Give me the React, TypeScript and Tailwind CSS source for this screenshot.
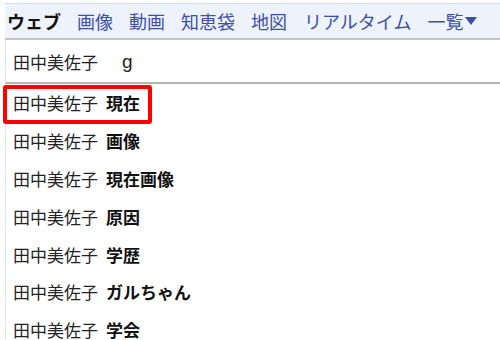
import React from "react";

const font = { fontFamily: '"Noto Sans CJK JP", "Noto Sans", sans-serif' };

const rows = ["現在", "画像", "現在画像", "原因", "学歴", "ガルちゃん", "学会"];

export default function App() {
  return (
    <div className="relative w-[500px] h-[340px] bg-white overflow-hidden pl-[5px] pt-[3px] text-[#222]" style={font}>
      <div className="h-[37px] bg-[#eef2fb] border-t border-[#d3dcef] border-b-2 border-b-[#c4c4c4] flex items-center pl-[2px] gap-[16px] text-[18px] leading-none">
        <span className="font-bold text-[#111]">ウェブ</span>
        <span className="text-[#3b4fa3]">画像</span>
        <span className="text-[#3b4fa3]">動画</span>
        <span className="text-[#3b4fa3]">知恵袋</span>
        <span className="text-[#3b4fa3]">地図</span>
        <span className="text-[#3b4fa3] ml-[1px]">リアルタイム</span>
        <span className="text-[#3b4fa3] flex items-center">
          一覧
          <svg width="14" height="10" viewBox="0 0 14 10" className="ml-[1px]">
            <path d="M1 1 L13 1 L7 9 Z" fill="#3b4fa3" />
          </svg>
        </span>
      </div>
      <div className="h-[44px] flex items-center pl-[7px] border-l border-[#e6e6e6] border-b-2 border-b-[#b4b4b4] text-[17px] leading-none">
        <span>田中美佐子</span>
        <span className="ml-[24px] text-[19px]" style={{ fontFamily: '"Liberation Sans", Arial, sans-serif' }}>g</span>
      </div>
      <div className="border-l border-[#e6e6e6] text-[17px] leading-none">
        {rows.map((r) => (
          <div key={r} className="h-[37.8px] flex items-center pl-[7px]">
            <span>田中美佐子</span>
            <span className="ml-[8px] font-bold text-[#111]">{r}</span>
          </div>
        ))}
      </div>
      <div className="absolute left-[3px] top-[85px] w-[149px] h-[39px] border-[4px] border-[#ff0000] rounded-[3px]" />
    </div>
  );
}
